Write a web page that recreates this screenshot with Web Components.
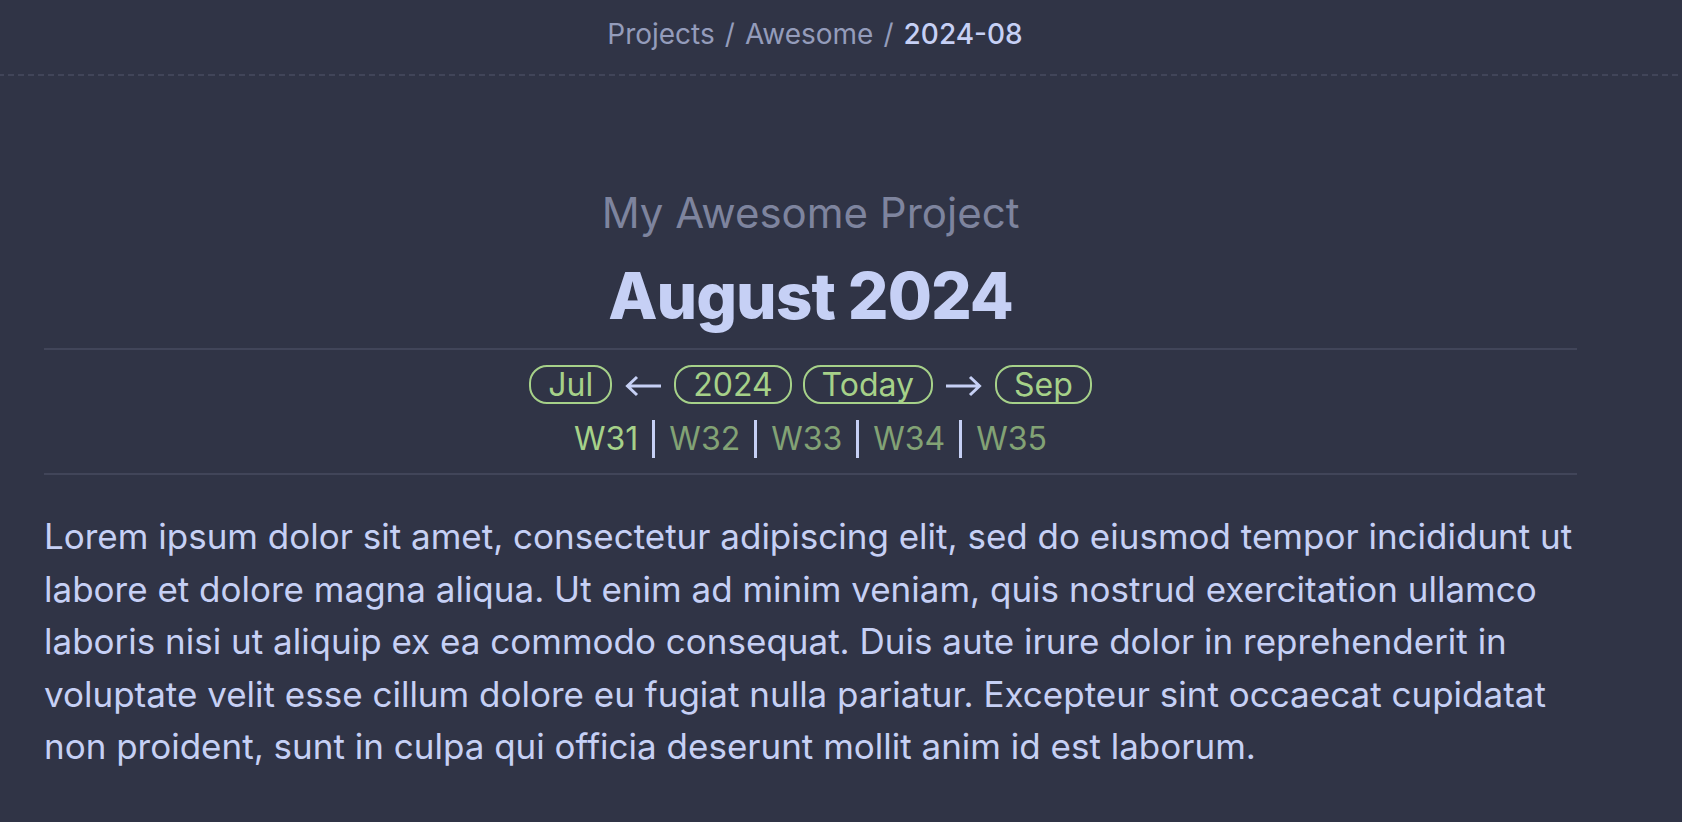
<!DOCTYPE html>
<html lang="en">
<head>
<meta charset="utf-8">
<meta name="viewport" content="width=device-width, initial-scale=1">
<title>August 2024</title>
<style>
:root {
  --base: #303446;
  --text: #c6d0f5;
  --subtext: #949cbb;
  --muted: #7e849e;
  --line: #414559;
  --green: #a6d189;
}
body { margin: 0; min-height: 100vh; background: var(--base); color: var(--text); font-family: Inter, "Liberation Sans", sans-serif; }
</style>
</head>
<body>
<note-app></note-app>
<script>
const define = (name, html) => customElements.define(name, class extends HTMLElement {
  constructor() {
    super();
    const t = document.createElement('template');
    t.innerHTML = html;
    this.attachShadow({ mode: 'open' }).append(t.content.cloneNode(true));
  }
});

define('crumb-bar', `
<style>
:host { display: block; border-bottom: 2px solid transparent; border-image: repeating-linear-gradient(90deg, var(--line) 0 6px, transparent 6px 10px) 2; padding: 17px 52px 23px 0; }
nav { display: flex; justify-content: center; gap: 10px; font-size: 28px; line-height: 34px; color: var(--subtext); }
::slotted(a) { color: var(--subtext); text-decoration: none; }
::slotted([aria-current]) { color: var(--text); font-weight: 500; }
</style>
<nav aria-label="Breadcrumb"><slot></slot></nav>`);

define('note-heading', `
<style>
:host { display: block; text-align: center; }
p { margin: 0; font-size: 42px; line-height: 64px; color: var(--muted); }
h1 { margin: 0; padding-bottom: 1px; font-size: 64px; line-height: 102px; font-weight: 800; letter-spacing: -1px; }
</style>
<p><slot name="project"></slot></p>
<h1><slot></slot></h1>`);

define('pill-link', `
<style>
:host { display: block; }
a { display: block; box-sizing: border-box; height: 39px; padding: 0 17px; border: 2px solid var(--green); border-radius: 18px; color: var(--green); font-size: 32px; line-height: 35px; text-decoration: none; }
</style>
<a href="#"><slot></slot></a>`);

define('nav-arrow', `
<style>
:host { display: block; margin: 0 2px; }
:host([to="next"]) svg { transform: scaleX(-1); }
svg { display: block; width: 36px; height: 24px; fill: none; stroke: var(--text); stroke-width: 3; }
</style>
<svg viewBox="0 0 36 24" aria-hidden="true"><path d="M36 13H3M12 4L2.500 13L12 22"/></svg>`);

define('week-link', `
<style>
:host { display: block; }
a { color: var(--green); text-decoration: none; }
:host([absent]) a { opacity: .7; }
</style>
<a href="#"><slot></slot></a>`);

define('period-nav', `
<style>
:host { display: block; border: solid var(--line); border-width: 2px 0; padding: 15px 0 13px; }
div { display: flex; justify-content: center; align-items: center; }
.periods { gap: 11px; }
.weeks { margin-top: 14px; gap: 14px; font-size: 32px; line-height: 42px; }
.bar { width: 3px; height: 38px; background: var(--text); }
</style>
<nav aria-label="Periods">
<div class="periods"><pill-link>Jul</pill-link><nav-arrow></nav-arrow><pill-link>2024</pill-link><pill-link>Today</pill-link><nav-arrow to="next"></nav-arrow><pill-link>Sep</pill-link></div>
<div class="weeks"><week-link>W31</week-link><span class="bar"></span><week-link absent>W32</week-link><span class="bar"></span><week-link absent>W33</week-link><span class="bar"></span><week-link absent>W34</week-link><span class="bar"></span><week-link absent>W35</week-link></div>
</nav>`);

define('note-text', `
<style>
:host { display: block; margin-top: 35px; font-size: 35px; line-height: 1.5; }
p { margin: 0; }
</style>
<p><slot></slot></p>`);

define('note-app', `
<style>
:host { display: block; }
main { margin: 0 105px 0 44px; padding-top: 105px; }
</style>
<crumb-bar><a href="#">Projects</a><span>/</span><a href="#">Awesome</a><span>/</span><span aria-current="page">2024-08</span></crumb-bar>
<main>
<note-heading><span slot="project">My Awesome Project</span>August 2024</note-heading>
<period-nav></period-nav>
<note-text>Lorem ipsum dolor sit amet, consectetur adipiscing elit, sed do eiusmod tempor incididunt ut labore et dolore magna aliqua. Ut enim ad minim veniam, quis nostrud exercitation ullamco laboris nisi ut aliquip ex ea commodo consequat. Duis aute irure dolor in reprehenderit in voluptate velit esse cillum dolore eu fugiat nulla pariatur. Excepteur sint occaecat cupidatat non proident, sunt in culpa qui officia deserunt mollit anim id est laborum.</note-text>
</main>`);
</script>
</body>
</html>
